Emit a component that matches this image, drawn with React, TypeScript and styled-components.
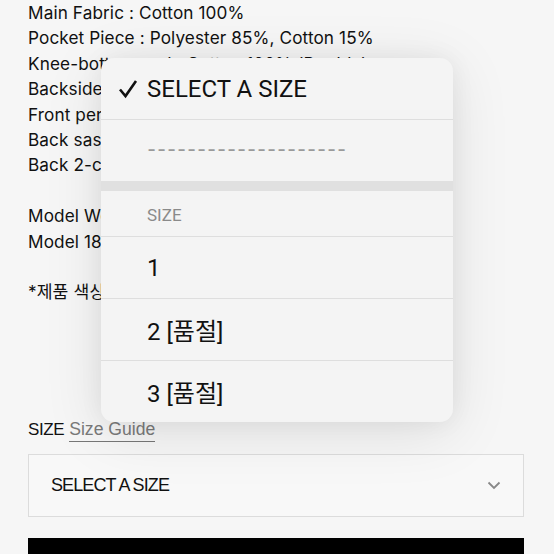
import React from "react";
import styled, { createGlobalStyle } from "styled-components";

const GlobalStyle = createGlobalStyle`
  html, body {
    margin: 0;
    padding: 0;
    background: #f6f6f6;
  }
  body {
    font-family: Inter, "Noto Sans", "Noto Sans CJK KR", sans-serif;
    color: #111;
    overflow: hidden;
  }
`;

const Page = styled.div`
  position: relative;
  width: 554px;
  height: 554px;
  overflow: hidden;
  padding: 0 30px 0 28px;
  box-sizing: border-box;
`;

const SpecList = styled.div`
  font-size: 17.2px;
  line-height: 25.4px;
  letter-spacing: 0.1px;
  white-space: nowrap;
`;

const SpecLine = styled.div`
  height: 25.4px;
`;

const SizeHeader = styled.div`
  margin-top: 113px;
  font-size: 17px;
  line-height: 24px;
  display: flex;
  gap: 5px;
  font-family: "Liberation Sans", Arial, sans-serif;
  letter-spacing: -0.4px;
`;

const GuideLink = styled.span`
  color: #7a7a7a;
  border-bottom: 1px solid #777;
  line-height: 22px;
  font-size: 17.6px;
  letter-spacing: 0;
`;

const SelectBox = styled.div`
  margin-top: 12px;
  height: 63px;
  box-sizing: border-box;
  border: 1px solid #dcdcdc;
  background: #f8f8f8;
  display: flex;
  align-items: center;
  justify-content: space-between;
  padding: 0 22px 0 22px;
  font-family: "Liberation Sans", Arial, sans-serif;
  font-size: 18px;
  letter-spacing: -0.9px;
`;

const BuyButton = styled.div`
  margin-top: 21px;
  height: 40px;
  background: #000;
`;

const Popover = styled.div`
  position: absolute;
  top: 58px;
  left: 101px;
  width: 352px;
  border-radius: 13px;
  background: #f4f4f4;
  overflow: hidden;
  box-shadow: 0 10px 60px rgba(0, 0, 0, 0.1), 0 0 24px rgba(0, 0, 0, 0.06);
  font-family: Roboto, "Noto Sans CJK KR", sans-serif;
`;

const Option = styled.div<{ $height?: number }>`
  height: ${(p) => p.$height ?? 61}px;
  display: flex;
  align-items: center;
  padding-left: 46px;
  font-size: 24px;
  color: #111;
  border-bottom: 1px solid #dedede;
  &:last-child {
    border-bottom: none;
  }
`;

const SelectedOption = styled(Option)`
  padding-left: 17px;
  gap: 9px;
`;

const Dashes = styled(Option)`
  color: #9a9a9a;
  font-family: "Liberation Mono", monospace;
  font-size: 22px;
  letter-spacing: -3.2px;
  padding-left: 44px;
  border-bottom: none;
`;

const GroupGap = styled.div`
  height: 10px;
  background: #e0e0e0;
`;

const GroupLabel = styled(Option)`
  font-size: 17px;
  color: #8a8a8a;
  padding-top: 3px;
  box-sizing: border-box;
`;

const specs = [
  "Main Fabric : Cotton 100%",
  "Pocket Piece : Polyester 85%, Cotton 15%",
  "Knee-bottom pad : Cotton 100% (Double)",
  "Backside waistband : Cotton 100%",
  "Front pen pocket detail",
  "Back sashiko stitch detail",
  "Back 2-cargo pocket detail",
  "",
  "Model Wearing Size 2",
  "Model 182cm / 68kg",
  "",
  "*제품 색상은 모니터 환경에 따라 다를 수 있습니다.",
];

const Check = () => (
  <svg width="20" height="20" viewBox="0 0 20 20">
    <path d="M2 10.5 L7.5 17 L18 2" fill="none" stroke="#111" strokeWidth="2.6" />
  </svg>
);

const Chevron = () => (
  <svg width="14" height="9" viewBox="0 0 14 9">
    <path d="M1.5 1.5 L7 7 L12.5 1.5" fill="none" stroke="#888" strokeWidth="1.8" />
  </svg>
);

const App: React.FC = () => {
  return (
    <>
      <GlobalStyle />
      <Page>
        <SpecList>
          {specs.map((s, i) => (
            <SpecLine key={i}>{s}</SpecLine>
          ))}
        </SpecList>
        <SizeHeader>
          <span>SIZE</span>
          <GuideLink>Size Guide</GuideLink>
        </SizeHeader>
        <SelectBox>
          <span>SELECT A SIZE</span>
          <Chevron />
        </SelectBox>
        <BuyButton />

        <Popover>
          <SelectedOption>
            <Check />
            <span>SELECT A SIZE</span>
          </SelectedOption>
          <Dashes>--------------------</Dashes>
          <GroupGap />
          <GroupLabel $height={46}>SIZE</GroupLabel>
          <Option>1</Option>
          <Option>2 [품절]</Option>
          <Option>3 [품절]</Option>
        </Popover>
      </Page>
    </>
  );
};

export default App;
